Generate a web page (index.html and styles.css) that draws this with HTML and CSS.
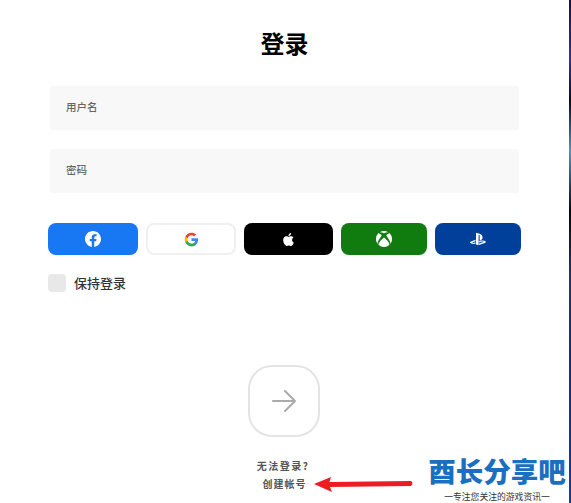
FILE: index.html
```html
<!DOCTYPE html>
<html lang="zh-CN">
<head>
  <meta charset="UTF-8">
  <meta name="viewport" content="width=device-width, initial-scale=1.0">
  <title>登录</title>
  <link rel="stylesheet" href="styles.css">
</head>
<body>
  <main class="login">
    <h1 class="login-title">登录</h1>

    <div class="field">用户名</div>
    <div class="field">密码</div>

    <!-- Social sign in -->
    <div class="socials">
      <button class="social social-facebook" aria-label="Facebook">
        <svg class="icon-fb" viewBox="0 0 24 24"><path fill="#fff" d="M24 12.073c0-6.627-5.373-12-12-12s-12 5.373-12 12c0 5.99 4.388 10.954 10.125 11.854v-8.385H7.078v-3.47h3.047V9.43c0-3.007 1.792-4.669 4.533-4.669 1.312 0 2.686.235 2.686.235v2.953H15.83c-1.491 0-1.956.925-1.956 1.874v2.25h3.328l-.532 3.47h-2.796v8.385C19.612 23.027 24 18.062 24 12.073z"/></svg>
      </button>
      <button class="social social-google" aria-label="Google">
        <svg class="icon-google" viewBox="0 0 24 24">
          <path fill="#4285F4" d="M22.56 12.25c0-.78-.07-1.53-.2-2.25H12v4.26h5.92c-.26 1.37-1.04 2.53-2.21 3.31v2.77h3.57c2.08-1.92 3.28-4.74 3.28-8.09z"/>
          <path fill="#34A853" d="M12 23c2.97 0 5.46-.98 7.28-2.66l-3.57-2.77c-.98.66-2.23 1.06-3.71 1.06-2.86 0-5.29-1.93-6.16-4.53H2.18v2.84C3.99 20.53 7.7 23 12 23z"/>
          <path fill="#FBBC05" d="M5.84 14.09c-.22-.66-.35-1.36-.35-2.09s.13-1.43.35-2.09V7.07H2.18C1.43 8.55 1 10.22 1 12s.43 3.45 1.18 4.93l3.66-2.84z"/>
          <path fill="#EA4335" d="M12 5.38c1.62 0 3.06.56 4.21 1.64l3.15-3.15C17.45 2.09 14.97 1 12 1 7.7 1 3.99 3.47 2.18 7.07l3.66 2.84c.87-2.6 3.3-4.53 6.16-4.53z"/>
        </svg>
      </button>
      <button class="social social-apple" aria-label="Apple">
        <svg class="icon-apple" viewBox="0 0 24 24"><path fill="#fff" d="M12.152 6.896c-.948 0-2.415-1.078-3.96-1.04-2.04.027-3.91 1.183-4.961 3.014-2.117 3.675-.546 9.103 1.519 12.09 1.013 1.454 2.208 3.09 3.792 3.039 1.52-.065 2.09-.987 3.935-.987 1.831 0 2.35.987 3.96.948 1.637-.026 2.676-1.48 3.676-2.948 1.156-1.688 1.636-3.325 1.662-3.415-.039-.013-3.182-1.221-3.22-4.857-.026-3.04 2.48-4.494 2.597-4.559-1.429-2.09-3.623-2.324-4.39-2.376-2-.156-3.675 1.09-4.61 1.09zM15.53 3.83c.843-1.012 1.4-2.427 1.245-3.83-1.207.052-2.662.805-3.532 1.818-.78.896-1.454 2.338-1.273 3.714 1.338.104 2.715-.688 3.559-1.701"/></svg>
      </button>
      <button class="social social-xbox" aria-label="Xbox">
        <svg class="icon-fb" viewBox="0 0 24 24"><path fill="#fff" d="M4.102 21.033C6.211 22.881 8.977 24 12 24c3.026 0 5.789-1.119 7.902-2.967 1.877-1.912-4.316-8.709-7.902-11.417-3.582 2.708-9.779 9.505-7.898 11.417zm11.16-14.406c2.5 2.961 7.484 10.313 6.076 12.912C23.002 17.48 24 14.861 24 12.004c0-3.34-1.365-6.362-3.57-8.536 0 0-.027-.022-.082-.042-.063-.022-.152-.045-.281-.045-.592 0-1.985.434-4.805 3.246zM3.654 3.426c-.057.02-.082.041-.086.042C1.365 5.642 0 8.664 0 12.004c0 2.854.998 5.473 2.661 7.533-1.401-2.605 3.579-9.951 6.08-12.91-2.82-2.813-4.216-3.245-4.806-3.245-.131 0-.223.021-.281.046v-.002zM12 3.551S9.055 1.828 6.755 1.746c-.903-.033-1.454.295-1.521.339C7.379.646 9.659 0 11.984 0H12c2.334 0 4.605.646 6.766 2.085-.068-.046-.615-.372-1.52-.339C14.946 1.828 12 3.545 12 3.545v.006z"/></svg>
      </button>
      <button class="social social-playstation" aria-label="PlayStation">
        <svg class="icon-fb" viewBox="0 0 24 24"><path fill="#fff" d="M8.985 2.596v17.548l3.915 1.261V6.688c0-.69.304-1.151.794-.991.636.181.76.814.76 1.505v5.876c2.441 1.193 4.362-.002 4.362-3.153 0-3.237-1.126-4.675-4.438-5.827-1.307-.448-3.728-1.186-5.391-1.502h-.002zm4.656 16.242l6.296-2.275c.715-.258.826-.625.246-.818-.586-.192-1.637-.139-2.357.123l-4.205 1.5V14.98l.24-.085s1.201-.42 2.913-.615c1.696-.18 3.785.03 5.437.661 1.848.601 2.04 1.472 1.576 2.072-.465.6-1.622 1.036-1.622 1.036l-8.544 3.107V18.86l.02-.022zM1.808 18.6c-1.9-.545-2.214-1.668-1.352-2.32.801-.586 2.16-1.052 2.16-1.052l5.615-2.013v2.313L4.2 17.016c-.705.271-.825.632-.239.826.586.195 1.637.15 2.343-.12L8.247 17v2.074c-.12.03-.256.044-.39.073-1.939.331-3.996.196-6.038-.479z"/></svg>
      </button>
    </div>

    <label class="remember">
      <span class="remember-box"></span>
      <span>保持登录</span>
    </label>

    <button class="submit" aria-label="登录">
      <svg class="submit-arrow" viewBox="0 0 24 24" fill="none" stroke="#aaa" stroke-width="2" stroke-linecap="round" stroke-linejoin="round">
        <path d="M1 12h22M13 2l10 10-10 10"/>
      </svg>
    </button>

    <a class="link link-help">无法登录?</a>
    <a class="link link-create">创建帐号</a>
  </main>

  <div class="edge"></div>

  <!-- Annotation and watermark on top of the screenshot -->
  <svg class="red-arrow" viewBox="0 0 102 18">
    <path fill="#ed1c24" d="M1 8 18 1 16.500 6 98 5 Q101 7 98 10 L17 11 19 16Z"/>
  </svg>
  <div class="watermark">
    <div class="watermark-name">酉长分享吧</div>
    <div class="watermark-sub">一专注您关注的游戏资讯一</div>
  </div>
</body>
</html>
```

FILE: styles.css
```css
* {
  box-sizing: border-box;
}

html, body {
  height: 100%;
}

body {
  margin: 0;
  display: flex;
  background: #fff;
  overflow: hidden;
  font-family: "Noto Sans CJK SC", "Noto Sans", sans-serif;
}

.login {
  flex: 1;
  display: flex;
  flex-direction: column;
  padding: 0 48px;
}

.login-title {
  margin: 25px 0 0;
  font-size: 24px;
  line-height: 36px;
  font-weight: 700;
  text-align: center;
  color: #000;
}

.field {
  height: 44px;
  margin: 25px 2px 0;
  padding: 0 0 3px 16px;
  display: flex;
  align-items: center;
  background: #f8f8f8;
  border-radius: 3px;
  font-size: 10.500px;
  font-weight: 500;
  color: #666;
}

.field + .field {
  margin-top: 19px;
}

.socials {
  display: grid;
  grid-template-columns: 90px 90px 89px 86px 86px;
  gap: 8px;
  width: 473px;
  margin-top: 30px;
}

.social {
  height: 32px;
  padding: 0;
  display: flex;
  align-items: center;
  justify-content: center;
  border: none;
  border-radius: 8px;
}

.social svg {
  display: block;
}

.icon-fb {
  width: 16px;
  height: 16px;
}

.icon-google {
  width: 15px;
  height: 15px;
}

.icon-apple {
  width: 13px;
  height: 13px;
}

.social-facebook {
  background: #1877f2;
}

.social-google {
  background: #fff;
  border: 2px solid #f0f0f0;
}

.social-apple {
  background: #000;
}

.social-xbox {
  background: #107c10;
}

.social-playstation {
  background: #003f9a;
}

.remember {
  display: flex;
  align-items: center;
  gap: 8px;
  margin-top: 19px;
  font-size: 13px;
  line-height: 18px;
  font-weight: 500;
  color: #333;
}

.remember-box {
  width: 18px;
  height: 18px;
  background: #e8e8e8;
  border-radius: 4px;
}

.submit {
  width: 72px;
  height: 72px;
  margin: 73px 0 0 200px;
  padding: 0;
  display: flex;
  align-items: center;
  justify-content: center;
  background: #fff;
  border: 2px solid #e4e4e4;
  border-radius: 24px;
}

.submit-arrow {
  width: 24px;
  height: 24px;
}

.link {
  text-align: center;
  font-size: 10px;
  line-height: 18px;
  font-weight: 700;
  letter-spacing: 1.500px;
  color: #555;
}

.link-help {
  margin-top: 20px;
  margin-right: 3px;
}

.link-create {
  letter-spacing: 1px;
}

.edge {
  width: 2px;
  background: linear-gradient(#1a1040 0, #3a2f9a 12%, #0a0a1a 20%, #5a90c8 30%, #05060f 42%, #2a3560 55%, #1e2a80 70%, #2035a0 100%);
}

.red-arrow {
  position: absolute;
  left: 313px;
  top: 476px;
  width: 102px;
  height: 18px;
}

.watermark {
  position: absolute;
  left: 420px;
  top: 451px;
  width: 154px;
  text-align: center;
}

.watermark-name {
  font-size: 27.500px;
  line-height: 38px;
  font-weight: 900;
  color: #1a6fc0;
}

.watermark-sub {
  margin-top: 1px;
  font-size: 8.800px;
  line-height: 13px;
  color: #333;
}
```
